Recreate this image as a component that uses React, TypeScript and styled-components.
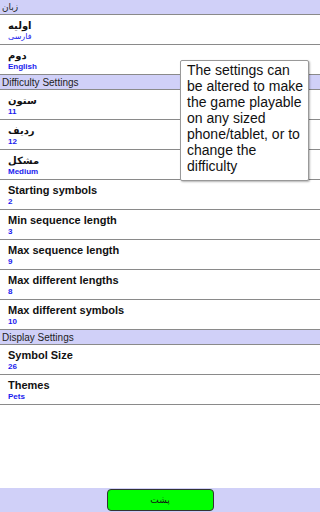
import React from "react";
import styled, { createGlobalStyle } from "styled-components";

const Global = createGlobalStyle`
  html, body { margin: 0; padding: 0; background: #ffffff; }
  body { font-family: "Liberation Sans", "DejaVu Sans", Arial, sans-serif; }
  #root { width: 320px; height: 512px; }
`;

const Screen = styled.div`
  position: relative;
  width: 320px;
  height: 512px;
  display: flex;
  flex-direction: column;
  background: #ffffff;
  overflow: hidden;
`;

const List = styled.div`
  flex: 1;
  display: flex;
  flex-direction: column;
`;

const SectionHeader = styled.div<{ $fa?: boolean }>`
  height: 15px;
  padding: 1px 0 0 2px;
  box-sizing: border-box;
  font-size: ${(p) => (p.$fa ? "9px" : "10px")};
  line-height: 13px;
  color: #222222;
  background: #d0d0f8;
  border-bottom: 1px solid #8a8a8a;
`;

const Row = styled.div`
  height: 30px;
  box-sizing: border-box;
  padding: 3px 0 0 8px;
  border-bottom: 1px solid #8a8a8a;
  display: flex;
  flex-direction: column;
`;

const Title = styled.div<{ $fa?: boolean }>`
  font-size: ${(p) => (p.$fa ? "10px" : "11px")};
  line-height: ${(p) => (p.$fa ? "12px" : "14px")};
  padding-top: ${(p) => (p.$fa ? "2px" : "0")};
  height: 14px;
  box-sizing: border-box;
  font-weight: bold;
  color: #111111;
  white-space: nowrap;
`;

const Value = styled.div<{ $fa?: boolean }>`
  font-size: 8px;
  line-height: 10px;
  font-weight: ${(p) => (p.$fa ? "normal" : "bold")};
  color: #1a1aee;
  white-space: nowrap;
`;

const BottomBar = styled.div`
  height: 24px;
  background: #d0d0f8;
  display: flex;
  justify-content: center;
  align-items: flex-start;
  padding-top: 1px;
  box-sizing: border-box;
`;

const BackButton = styled.button`
  width: 107px;
  height: 22px;
  box-sizing: border-box;
  background: #00ff00;
  border: 1px solid #333333;
  border-radius: 4px;
  font-family: "DejaVu Sans", "Liberation Sans", sans-serif;
  font-size: 9px;
  color: #111111;
  padding: 0;
  display: flex;
  align-items: center;
  justify-content: center;
`;

const Tooltip = styled.div`
  position: absolute;
  left: 180px;
  top: 60px;
  width: 120px;
  padding: 1px 1px 6px 6px;
  background: #ffffff;
  border: 1px solid #999999;
  border-radius: 2px;
  box-shadow: 1px 1px 2px rgba(0, 0, 0, 0.3);
  font-size: 14px;
  line-height: 16px;
  color: #111111;
`;

type Item = { title: string; value: string; fa?: boolean; faValue?: boolean };

const language: Item[] = [
  { title: "اولیه", value: "فارسی", fa: true, faValue: true },
  { title: "دوم", value: "English", fa: true },
];

const difficulty: Item[] = [
  { title: "ستون", value: "11", fa: true },
  { title: "ردیف", value: "12", fa: true },
  { title: "مشکل", value: "Medium", fa: true },
  { title: "Starting symbols", value: "2" },
  { title: "Min sequence length", value: "3" },
  { title: "Max sequence length", value: "9" },
  { title: "Max different lengths", value: "8" },
  { title: "Max different symbols", value: "10" },
];

const display: Item[] = [
  { title: "Symbol Size", value: "26" },
  { title: "Themes", value: "Pets" },
];

const Rows = ({ items }: { items: Item[] }) => (
  <>
    {items.map((it) => (
      <Row key={it.title}>
        <Title $fa={it.fa}>{it.title}</Title>
        <Value $fa={it.faValue}>{it.value}</Value>
      </Row>
    ))}
  </>
);

export default function App() {
  return (
    <Screen>
      <Global />
      <List>
        <SectionHeader $fa>زبان</SectionHeader>
        <Rows items={language} />
        <SectionHeader>Difficulty Settings</SectionHeader>
        <Rows items={difficulty} />
        <SectionHeader>Display Settings</SectionHeader>
        <Rows items={display} />
      </List>
      <BottomBar>
        <BackButton>پشت</BackButton>
      </BottomBar>
      <Tooltip>
        The settings can be altered to make the game playable on any sized
        phone/tablet, or to change the difficulty
      </Tooltip>
    </Screen>
  );
}
